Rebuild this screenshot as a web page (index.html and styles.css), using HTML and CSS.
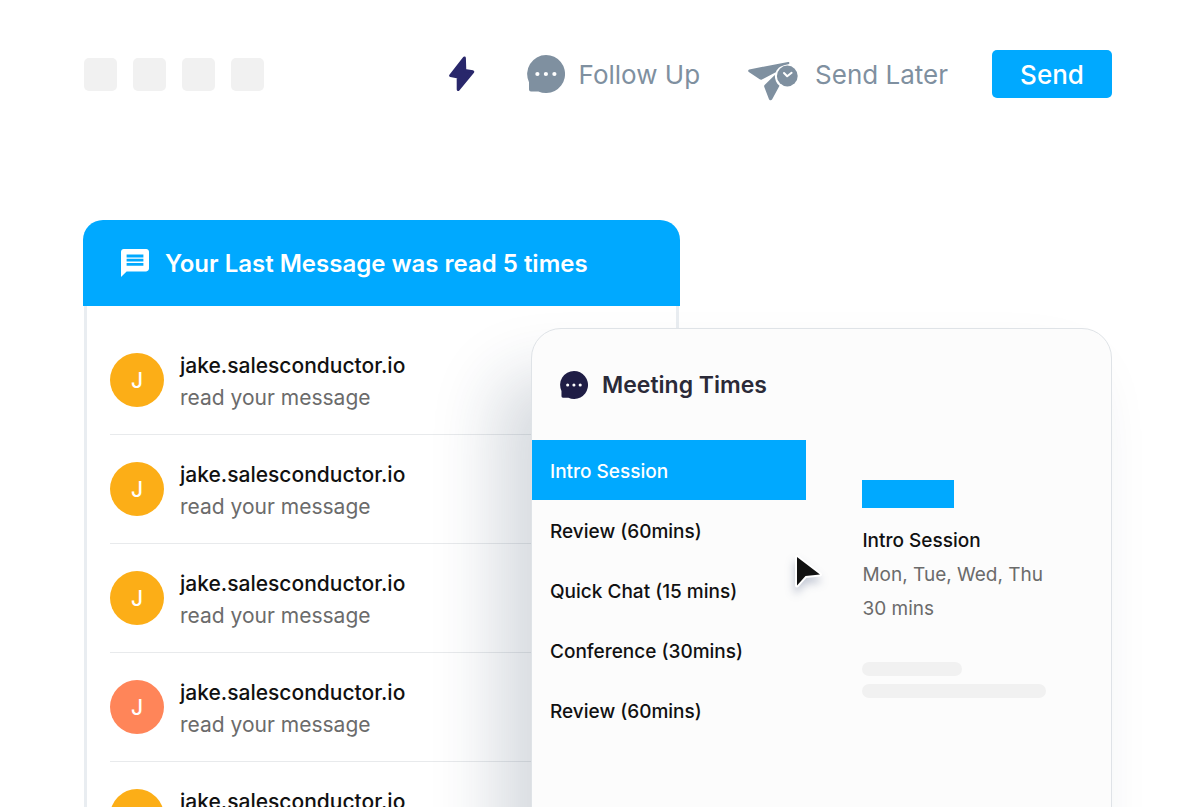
FILE: index.html
```html
<!DOCTYPE html>
<html lang="en">
<head>
    <meta charset="UTF-8">
    <meta name="viewport" content="width=device-width, initial-scale=1.0">
    <title>Meeting Times</title>
    <link rel="stylesheet" href="styles.css">
</head>
<body>

    <!-- Shared icons -->
    <svg class="sprite" aria-hidden="true">
        <symbol id="icon-bubble" viewBox="0 0 38 38">
            <path fill="currentColor" d="M19 0a19 19 0 1 1-7.6 36.4H4a2 2 0 0 1-2-2v-7.2A19 19 0 0 1 19 0z"/>
            <circle class="dot" cx="10.4" cy="19" r="2.1"/>
            <circle class="dot" cx="18.9" cy="19" r="2.1"/>
            <circle class="dot" cx="27.4" cy="19" r="2.1"/>
        </symbol>
    </svg>

    <!-- Toolbar -->
    <header class="toolbar">
        <div class="placeholders">
            <span></span>
            <span></span>
            <span></span>
            <span></span>
        </div>
        <div class="actions">
            <button class="action bolt" aria-label="Quick actions">
                <svg width="26" height="36" viewBox="0 0 26 36">
                    <path d="M15.400 2L1.600 19.600l7.600 1.400v12.600L23.800 15.800l-8-1.200z" fill="currentColor" stroke="currentColor" stroke-width="3" stroke-linejoin="round"/>
                </svg>
            </button>
            <button class="action follow">
                <svg width="38" height="38"><use href="#icon-bubble"/></svg>
                Follow Up
            </button>
            <button class="action later">
                <svg width="50" height="48" viewBox="0 -12 50 48">
                    <path fill="currentColor" d="M1.200 7.400L40 0C41.600-.2 42 1.800 40.400 2.200C34 3 29.500 5.500 27.800 10.200L14 17.400c-.8.400-1.600.3-2.300-.2L.8 10C-.2 9.200 0 7.700 1.200 7.400z"/>
                    <path fill="currentColor" d="M26.800 13c0 4.800 1.500 8.200 4.700 10.800L24.200 37.200c-.8 1.400-2.800 1.200-3.300-.3L16.200 24.800c-.2-.7-.1-1.300.4-1.800z"/>
                    <circle fill="currentColor" cx="39.300" cy="14" r="10.400"/>
                    <path d="M36 11l3.200 3.300L43.600 10.800" fill="none" stroke="#fff" stroke-width="2" stroke-linecap="round" stroke-linejoin="round"/>
                </svg>
                Send Later
            </button>
            <button class="send">Send</button>
        </div>
    </header>

    <main class="stage">

        <!-- Read receipts -->
        <section class="receipts">
            <h2 class="receipts-title">
                <svg width="28" height="28" viewBox="2 2 20 20">
                    <path fill="currentColor" d="M20 2H4c-1.100 0-2 .9-2 2v18l4-4h14c1.100 0 2-.9 2-2V4c0-1.100-.9-2-2-2zM6 6h12v2H6V6zm0 3h12v2H6V9zm0 3h12v2H6v-2z"/>
                </svg>
                Your Last Message was read 5 times
            </h2>
            <ul class="receipts-list">
                <li>
                    <span class="avatar">J</span>
                    <div class="receipt">
                        <p class="name">jake.salesconductor.io</p>
                        <p class="note">read your message</p>
                    </div>
                </li>
                <li>
                    <span class="avatar">J</span>
                    <div class="receipt">
                        <p class="name">jake.salesconductor.io</p>
                        <p class="note">read your message</p>
                    </div>
                </li>
                <li>
                    <span class="avatar">J</span>
                    <div class="receipt">
                        <p class="name">jake.salesconductor.io</p>
                        <p class="note">read your message</p>
                    </div>
                </li>
                <li>
                    <span class="avatar coral">J</span>
                    <div class="receipt">
                        <p class="name">jake.salesconductor.io</p>
                        <p class="note">read your message</p>
                    </div>
                </li>
                <li>
                    <span class="avatar">J</span>
                    <div class="receipt">
                        <p class="name">jake.salesconductor.io</p>
                        <p class="note">read your message</p>
                    </div>
                </li>
            </ul>
        </section>

        <!-- Meeting picker -->
        <section class="meetings">
            <h2 class="meetings-title">
                <svg width="28" height="28"><use href="#icon-bubble"/></svg>
                Meeting Times
            </h2>
            <div class="meetings-body">
                <nav class="menu">
                    <button class="selected">Intro Session</button>
                    <button>Review (60mins)</button>
                    <button>Quick Chat (15 mins)</button>
                    <button>Conference (30mins)</button>
                    <button>Review (60mins)</button>
                    <svg class="cursor" width="44" height="52" viewBox="0 0 44 52">
                        <path d="M11 7v28.500l8.500-9.500L34 24.500z" fill="#111" stroke="#fff" stroke-width="4" stroke-linejoin="round" paint-order="stroke"/>
                    </svg>
                </nav>
                <div class="details">
                    <div class="tag"></div>
                    <h3>Intro Session</h3>
                    <p>Mon, Tue, Wed, Thu</p>
                    <p>30 mins</p>
                    <div class="line short"></div>
                    <div class="line"></div>
                </div>
            </div>
        </section>

    </main>

</body>
</html>
```

FILE: styles.css
```css
/* Basic Reset */
* {
    margin: 0;
    padding: 0;
    box-sizing: border-box;
}

body {
    font-family: 'Inter', sans-serif;
    background: #fff;
    color: #111;
    display: flex;
    flex-direction: column;
    height: 100vh;
    padding-bottom: 1px;
    overflow: hidden;
}

button {
    font: inherit;
    color: inherit;
    background: none;
    border: none;
    cursor: pointer;
}

svg {
    display: block;
    flex-shrink: 0;
    overflow: visible;
}

.sprite {
    position: absolute;
    width: 0;
    height: 0;
}

.dot {
    fill: #fff;
}

/* Toolbar */
.toolbar {
    display: flex;
    justify-content: space-between;
    align-items: center;
    padding: 50px 68px 0 84px;
}

.placeholders {
    display: flex;
    gap: 16px;
}

.placeholders span {
    width: 33px;
    height: 33px;
    border-radius: 5px;
    background: #f1f1f1;
}

.actions {
    display: flex;
    align-items: center;
    font-size: 26px;
    color: #7f90a0;
}

.action {
    display: flex;
    align-items: center;
}

.bolt {
    color: #29276b;
    margin-right: 52px;
}

.follow {
    gap: 14px;
    margin-right: 48px;
}

.later {
    gap: 17px;
    margin-right: 44px;
}

.send {
    width: 120px;
    height: 48px;
    border-radius: 5px;
    background: #00a9ff;
    color: #fff;
    font-weight: 500;
}

/* The two cards share the middle column */
.stage {
    flex: 1;
    min-height: 0;
    display: grid;
    grid-template-columns: 448fr 149fr 432fr;
    grid-template-rows: minmax(0, 1fr);
    padding: 122px 68px 0 83px;
    overflow: hidden;
}

/* Read receipts */
.receipts {
    grid-column: 1 / 3;
    grid-row: 1;
}

.receipts-title {
    display: flex;
    align-items: center;
    gap: 16px;
    height: 86px;
    padding: 0 38px;
    border-radius: 20px 20px 0 0;
    background: #00a9ff;
    color: #fff;
    font-size: 24px;
    font-weight: 600;
}

.receipts-list {
    list-style: none;
    margin: 0 1px;
    padding: 20px 23px;
    border: 3px solid #e9edf1;
    border-top: none;
}

.receipts-list li {
    display: flex;
    align-items: center;
    gap: 16px;
    height: 109px;
    border-bottom: 1px solid #e8eaec;
}

.avatar {
    display: flex;
    align-items: center;
    justify-content: center;
    width: 54px;
    height: 54px;
    border-radius: 50%;
    background: #fcae17;
    color: #fff;
    font-size: 21px;
    font-weight: 500;
}

.coral {
    background: #ff8559;
}

.receipt {
    padding-top: 4px;
    font-size: 21px;
    line-height: 32px;
}

.name {
    font-weight: 500;
}

.note {
    color: #6b6b6b;
}

/* Meeting picker */
.meetings {
    grid-column: 2 / 4;
    grid-row: 1;
    margin: 108px 0 -100px;
    border: 1px solid #dfe3e7;
    border-radius: 30px;
    background: #fcfcfc;
    box-shadow: -34px 48px 66px rgba(30, 50, 80, 0.18);
}

.meetings-title {
    display: flex;
    align-items: center;
    gap: 14px;
    height: 111px;
    padding: 0 28px;
    font-size: 23px;
    font-weight: 600;
    color: #2b2a38;
}

.meetings-title svg {
    color: #1f1d45;
}

.meetings-body {
    display: flex;
}

.menu {
    position: relative;
    flex: 0 0 47.4%;
}

.menu button {
    display: block;
    width: 100%;
    height: 60px;
    padding: 2px 18px 0;
    text-align: left;
    font-size: 19px;
    font-weight: 500;
}

.menu .selected {
    background: #00a9ff;
    color: #fff;
}

.cursor {
    position: absolute;
    right: -24px;
    top: 110px;
    filter: drop-shadow(-1px 6px 4px rgba(30, 50, 100, 0.25));
}

.details {
    flex: 1;
    padding: 40px 56px;
    font-size: 19px;
    line-height: 34px;
    color: #6b6b6b;
}

.tag {
    width: 92px;
    height: 28px;
    margin-bottom: 16px;
    background: #00a9ff;
}

.details h3 {
    font-size: 19px;
    font-weight: 500;
    color: #111;
}

.line {
    height: 14px;
    max-width: 184px;
    margin-top: 8px;
    border-radius: 7px;
    background: #f1f1f1;
}

.short {
    width: 100px;
    margin-top: 36px;
}
```
